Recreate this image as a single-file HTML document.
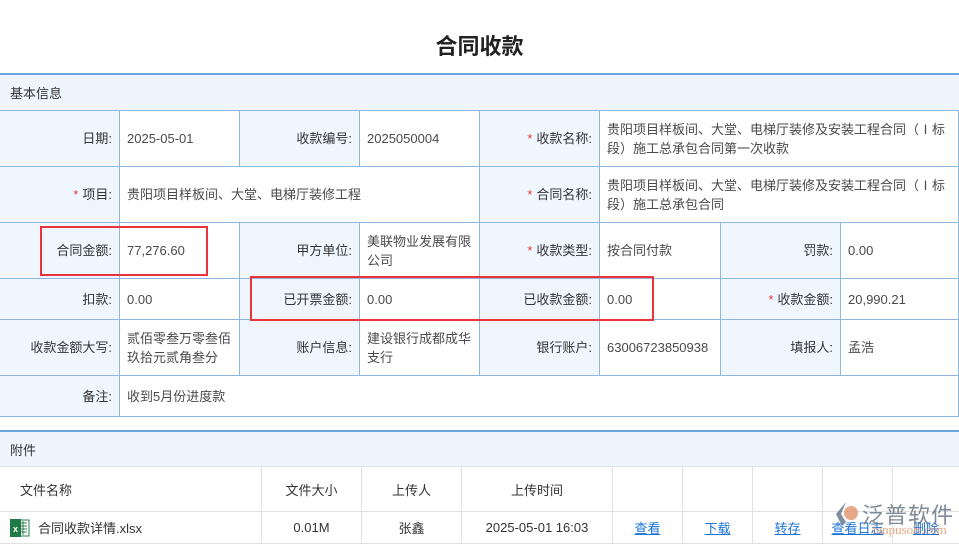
<!DOCTYPE html>
<html><head><meta charset="utf-8"><style>
*{margin:0;padding:0;box-sizing:border-box}
body{width:959px;height:544px;overflow:hidden;background:#fff;position:relative;font-family:"Liberation Sans","Noto Sans CJK SC",sans-serif;font-size:13px;color:#333}
.c{position:absolute;display:flex;align-items:center;border-right:1px solid #8fb6de;border-bottom:1px solid #8fb6de;line-height:19px}
.l{background:#f0f6fd;justify-content:flex-end;padding-right:7px;color:#333}
.v{background:#fff;padding-left:7px;padding-right:6px;color:#4a4a4a}
.s{color:#e4393c;margin-right:4px}
.t{position:absolute;left:0;top:29px;width:959px;text-align:center;font-size:22px;font-weight:bold;color:#222}
.h{position:absolute;left:0;width:959px;background:#eef5fd;border-top:2px solid #6aa6dc;padding-left:10px;display:flex;align-items:center}
.a{position:absolute;display:flex;align-items:center;justify-content:center;border-right:1px solid #e2e2e2;border-bottom:1px solid #e2e2e2}
.lk{color:#1a73d9;text-decoration:underline}
.r{position:absolute;border:2px solid #e8343a}
</style></head><body>
<div class="t">合同收款</div>
<div class="h" style="top:73px;height:38px;border-bottom:1px solid #8fb6de">基本信息</div>

<div class="c l" style="left:0;top:111px;width:120px;height:56px">日期:</div>
<div class="c v" style="left:120px;top:111px;width:120px;height:56px">2025-05-01</div>
<div class="c l" style="left:240px;top:111px;width:120px;height:56px">收款编号:</div>
<div class="c v" style="left:360px;top:111px;width:120px;height:56px">2025050004</div>
<div class="c l" style="left:480px;top:111px;width:120px;height:56px"><span class="s">*</span>收款名称:</div>
<div class="c v" style="left:600px;top:111px;width:359px;height:56px">贵阳项目样板间、大堂、电梯厅装修及安装工程合同（Ⅰ标段）施工总承包合同第一次收款</div>

<div class="c l" style="left:0;top:167px;width:120px;height:56px"><span class="s">*</span>项目:</div>
<div class="c v" style="left:120px;top:167px;width:360px;height:56px">贵阳项目样板间、大堂、电梯厅装修工程</div>
<div class="c l" style="left:480px;top:167px;width:120px;height:56px"><span class="s">*</span>合同名称:</div>
<div class="c v" style="left:600px;top:167px;width:359px;height:56px">贵阳项目样板间、大堂、电梯厅装修及安装工程合同（Ⅰ标段）施工总承包合同</div>

<div class="c l" style="left:0;top:223px;width:120px;height:56px">合同金额:</div>
<div class="c v" style="left:120px;top:223px;width:120px;height:56px">77,276.60</div>
<div class="c l" style="left:240px;top:223px;width:120px;height:56px">甲方单位:</div>
<div class="c v" style="left:360px;top:223px;width:120px;height:56px">美联物业发展有限公司</div>
<div class="c l" style="left:480px;top:223px;width:120px;height:56px"><span class="s">*</span>收款类型:</div>
<div class="c v" style="left:600px;top:223px;width:121px;height:56px">按合同付款</div>
<div class="c l" style="left:721px;top:223px;width:120px;height:56px">罚款:</div>
<div class="c v" style="left:841px;top:223px;width:118px;height:56px">0.00</div>

<div class="c l" style="left:0;top:279px;width:120px;height:41px">扣款:</div>
<div class="c v" style="left:120px;top:279px;width:120px;height:41px">0.00</div>
<div class="c l" style="left:240px;top:279px;width:120px;height:41px">已开票金额:</div>
<div class="c v" style="left:360px;top:279px;width:120px;height:41px">0.00</div>
<div class="c l" style="left:480px;top:279px;width:120px;height:41px">已收款金额:</div>
<div class="c v" style="left:600px;top:279px;width:121px;height:41px">0.00</div>
<div class="c l" style="left:721px;top:279px;width:120px;height:41px"><span class="s">*</span>收款金额:</div>
<div class="c v" style="left:841px;top:279px;width:118px;height:41px">20,990.21</div>

<div class="c l" style="left:0;top:320px;width:120px;height:56px">收款金额大写:</div>
<div class="c v" style="left:120px;top:320px;width:120px;height:56px">贰佰零叁万零叁佰玖拾元贰角叁分</div>
<div class="c l" style="left:240px;top:320px;width:120px;height:56px">账户信息:</div>
<div class="c v" style="left:360px;top:320px;width:120px;height:56px">建设银行成都成华支行</div>
<div class="c l" style="left:480px;top:320px;width:120px;height:56px">银行账户:</div>
<div class="c v" style="left:600px;top:320px;width:121px;height:56px">63006723850938</div>
<div class="c l" style="left:721px;top:320px;width:120px;height:56px">填报人:</div>
<div class="c v" style="left:841px;top:320px;width:118px;height:56px">孟浩</div>

<div class="c l" style="left:0;top:376px;width:120px;height:41px">备注:</div>
<div class="c v" style="left:120px;top:376px;width:839px;height:41px">收到5月份进度款</div>

<div class="r" style="left:40px;top:226px;width:168px;height:50px"></div>
<div class="r" style="left:250px;top:276px;width:404px;height:45px"></div>

<div class="h" style="top:430px;height:37px;border-bottom:1px solid #e2e2e2">附件</div>
<div class="a" style="left:0;top:467px;width:262px;height:45px;justify-content:flex-start;padding-left:20px">文件名称</div>
<div class="a" style="left:262px;top:467px;width:100px;height:45px">文件大小</div>
<div class="a" style="left:362px;top:467px;width:100px;height:45px">上传人</div>
<div class="a" style="left:462px;top:467px;width:151px;height:45px">上传时间</div>
<div class="a" style="left:613px;top:467px;width:70px;height:45px"></div>
<div class="a" style="left:683px;top:467px;width:70px;height:45px"></div>
<div class="a" style="left:753px;top:467px;width:70px;height:45px"></div>
<div class="a" style="left:823px;top:467px;width:70px;height:45px"></div>
<div class="a" style="left:893px;top:467px;width:66px;height:45px;border-right:none"></div>

<div class="a" style="left:0;top:512px;width:262px;height:32px;justify-content:flex-start;padding-left:10px">
<svg width="20" height="20" viewBox="0 0 20 20" style="margin-right:8px"><rect x="6" y="2" width="13" height="16" fill="#fff" stroke="#2e7d4f"/><path d="M9 5h8M9 8h8M9 11h8M9 14h8M13 3v14" stroke="#2e7d4f" stroke-width="1"/><rect x="0" y="1" width="11" height="18" fill="#1f7a45"/><text x="5.5" y="14" font-size="9" fill="#fff" text-anchor="middle" font-weight="bold" font-family="Liberation Sans">x</text></svg>合同收款详情.xlsx</div>
<div class="a" style="left:262px;top:512px;width:100px;height:32px">0.01M</div>
<div class="a" style="left:362px;top:512px;width:100px;height:32px">张鑫</div>
<div class="a" style="left:462px;top:512px;width:151px;height:32px">2025-05-01 16:03</div>
<div class="a" style="left:613px;top:512px;width:70px;height:32px"><span class="lk">查看</span></div>
<div class="a" style="left:683px;top:512px;width:70px;height:32px"><span class="lk">下载</span></div>
<div class="a" style="left:753px;top:512px;width:70px;height:32px"><span class="lk">转存</span></div>
<div class="a" style="left:823px;top:512px;width:70px;height:32px"><span class="lk">查看日志</span></div>
<div class="a" style="left:893px;top:512px;width:66px;height:32px;border-right:none"><span class="lk">删除</span></div>

<div style="position:absolute;left:832px;top:500px;width:127px;height:40px;opacity:.85">
<svg width="30" height="30" viewBox="0 0 30 30" style="position:absolute;left:0;top:0"><path d="M14 2 L4 14 L10 26 L14 22 L9 14 Z" fill="#6b7a90"/><circle cx="19" cy="13" r="7" fill="#e29a74"/></svg>
<div style="position:absolute;left:30px;top:-2px;font-size:22px;color:#6b7585;letter-spacing:1px">泛普软件</div>
<div style="position:absolute;left:40px;top:22px;font-size:13px;color:#e29a74;font-family:'Liberation Serif',serif">fanpusoft.com</div>
</div>
</body></html>
